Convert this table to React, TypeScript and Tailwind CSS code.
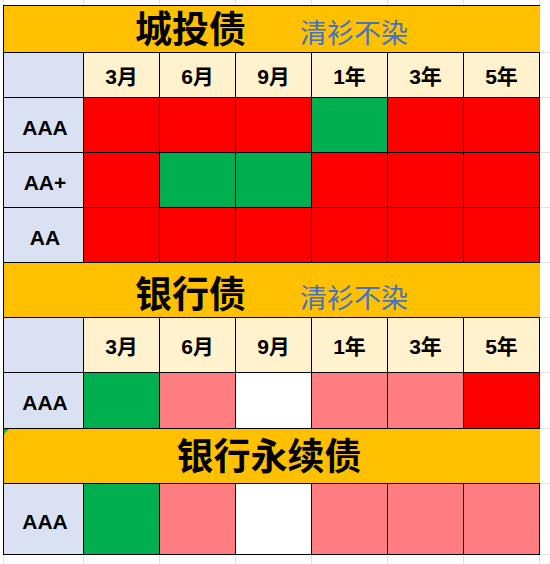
import React from "react";

type Cell = "R" | "G" | "P" | "W";

const CELL_BG: Record<Cell, string> = {
  R: "bg-[#ff0000]",
  G: "bg-[#00b050]",
  P: "bg-[#ff7c80]",
  W: "bg-white",
};

const TERMS = ["3月", "6月", "9月", "1年", "3年", "5年"];

const FONT = { fontFamily: '"Liberation Sans", "Noto Sans CJK SC", sans-serif' };

// right-hand gridline segments (heights include their bottom line)
const RIGHT_ROWS = [53, 45, 55, 55, 55, 55, 55, 56, 55, 71];

function TitleRow({ h, title, sub, centered }: { h: string; title: string; sub?: string; centered?: boolean }) {
  return (
    <div className={`${h} flex border-b border-black bg-[#ffc000] ${centered ? "items-center justify-center" : "items-end pb-[1px]"}`}>
      <span className={`text-[37px] font-bold leading-none text-black ${centered ? "pr-[6px] pt-[2px]" : "ml-[131px] mb-[2px]"}`}>{title}</span>
      {sub && <span className="ml-[54px] mb-[3px] text-[27px] leading-none text-[#4472c4]">{sub}</span>}
    </div>
  );
}

function HeaderRow({ h }: { h: string }) {
  return (
    <div className={`${h} flex border-b border-black`}>
      <div className="w-[80px] border-r border-black bg-[#d9e1f2]" />
      {TERMS.map((t) => (
        <div key={t} className="flex w-[76px] items-center justify-center border-r border-black bg-[#fff2cc] pt-[4px] text-[21px] font-bold text-black">
          {t}
        </div>
      ))}
    </div>
  );
}

function DataRow({ h, label, cells }: { h: string; label: string; cells: Cell[] }) {
  return (
    <div className={`${h} flex border-b border-black`}>
      <div className="flex w-[80px] items-center justify-center border-r border-black bg-[#d9e1f2] pl-[3px] pt-[5px] text-[21px] font-bold text-black">
        {label}
      </div>
      {cells.map((c, i) => (
        <div key={i} className={`w-[76px] border-r border-black ${CELL_BG[c]}`} />
      ))}
    </div>
  );
}

function GridStrip({ h }: { h: string }) {
  return (
    <div className={`${h} flex border-l border-[#e1e1e1]`}>
      <div className="w-[80px] border-r border-[#e1e1e1]" />
      {TERMS.map((t) => (
        <div key={t} className="w-[76px] border-r border-[#e1e1e1]" />
      ))}
    </div>
  );
}

export default function App() {
  return (
    <div className="flex h-[564px] w-[550px] overflow-hidden bg-white" style={FONT}>
      <div className="w-[3px]" />
      <div className="flex w-[537px] flex-col">
        <GridStrip h="h-[5px]" />
        <div className="relative border-l border-t border-black">
          <TitleRow h="h-[47px]" title="城投债" sub="清衫不染" />
          <HeaderRow h="h-[45px]" />
          <DataRow h="h-[55px]" label="AAA" cells={["R", "R", "R", "G", "R", "R"]} />
          <DataRow h="h-[55px]" label="AA+" cells={["R", "G", "G", "R", "R", "R"]} />
          <DataRow h="h-[55px]" label="AA" cells={["R", "R", "R", "R", "R", "R"]} />
          <TitleRow h="h-[55px]" title="银行债" sub="清衫不染" />
          <HeaderRow h="h-[55px]" />
          <DataRow h="h-[56px]" label="AAA" cells={["G", "P", "W", "P", "P", "R"]} />
          <div className="relative">
            <span className="absolute left-0 top-0 h-0 w-0 border-r-[5px] border-t-[5px] border-r-transparent border-t-[#00b050]" />
            <TitleRow h="h-[55px]" title="银行永续债" centered />
          </div>
          <DataRow h="h-[71px]" label="AAA" cells={["G", "P", "W", "P", "P", "P"]} />
        </div>
        <GridStrip h="flex-1" />
      </div>
      <div className="flex flex-1 flex-col">
        {RIGHT_ROWS.map((r, i) => (
          <div key={i} className="border-b border-[#e1e1e1]" style={{ height: r }} />
        ))}
      </div>
    </div>
  );
}
